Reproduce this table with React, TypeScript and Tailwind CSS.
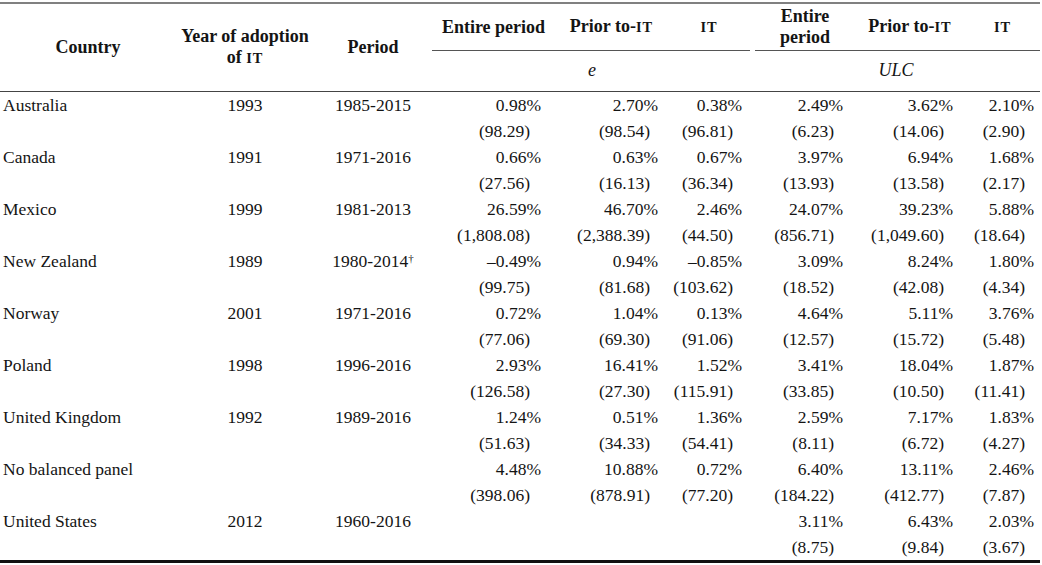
type Row = {
  country: string;
  year: string;
  period: string;
  dagger?: boolean;
  pct: string[];
  se: string[];
};

const ROWS: Row[] = [
  {
    country: "Australia",
    year: "1993",
    period: "1985-2015",
    pct: ["0.98%", "2.70%", "0.38%", "2.49%", "3.62%", "2.10%"],
    se: ["(98.29)", "(98.54)", "(96.81)", "(6.23)", "(14.06)", "(2.90)"],
  },
  {
    country: "Canada",
    year: "1991",
    period: "1971-2016",
    pct: ["0.66%", "0.63%", "0.67%", "3.97%", "6.94%", "1.68%"],
    se: ["(27.56)", "(16.13)", "(36.34)", "(13.93)", "(13.58)", "(2.17)"],
  },
  {
    country: "Mexico",
    year: "1999",
    period: "1981-2013",
    pct: ["26.59%", "46.70%", "2.46%", "24.07%", "39.23%", "5.88%"],
    se: ["(1,808.08)", "(2,388.39)", "(44.50)", "(856.71)", "(1,049.60)", "(18.64)"],
  },
  {
    country: "New Zealand",
    year: "1989",
    period: "1980-2014",
    dagger: true,
    pct: ["–0.49%", "0.94%", "–0.85%", "3.09%", "8.24%", "1.80%"],
    se: ["(99.75)", "(81.68)", "(103.62)", "(18.52)", "(42.08)", "(4.34)"],
  },
  {
    country: "Norway",
    year: "2001",
    period: "1971-2016",
    pct: ["0.72%", "1.04%", "0.13%", "4.64%", "5.11%", "3.76%"],
    se: ["(77.06)", "(69.30)", "(91.06)", "(12.57)", "(15.72)", "(5.48)"],
  },
  {
    country: "Poland",
    year: "1998",
    period: "1996-2016",
    pct: ["2.93%", "16.41%", "1.52%", "3.41%", "18.04%", "1.87%"],
    se: ["(126.58)", "(27.30)", "(115.91)", "(33.85)", "(10.50)", "(11.41)"],
  },
  {
    country: "United Kingdom",
    year: "1992",
    period: "1989-2016",
    pct: ["1.24%", "0.51%", "1.36%", "2.59%", "7.17%", "1.83%"],
    se: ["(51.63)", "(34.33)", "(54.41)", "(8.11)", "(6.72)", "(4.27)"],
  },
  {
    country: "No balanced panel",
    year: "",
    period: "",
    pct: ["4.48%", "10.88%", "0.72%", "6.40%", "13.11%", "2.46%"],
    se: ["(398.06)", "(878.91)", "(77.20)", "(184.22)", "(412.77)", "(7.87)"],
  },
  {
    country: "United States",
    year: "2012",
    period: "1960-2016",
    pct: ["", "", "", "3.11%", "6.43%", "2.03%"],
    se: ["", "", "", "(8.75)", "(9.84)", "(3.67)"],
  },
];

// right padding per value column, percent line vs. parenthesis line
const PCT_PAD = ["pr-[14px]", "pr-[10px]", "pr-[10px]", "pr-[12px]", "pr-[12px]", "pr-[6px]"];
const SE_PAD = ["pr-[25px]", "pr-[18px]", "pr-[19px]", "pr-[21px]", "pr-[21px]", "pr-[15px]"];

// small caps "IT"
const It = () => <span className="uppercase text-[0.8em] tracking-[1px]">it</span>;

const App = () => {
  return (
    <div className="w-[1042px] h-[565px] bg-white pt-[2px] font-['Liberation_Serif',serif] text-[#141414]">
      <table className="table-fixed border-collapse w-[1040px]">
        <colgroup>
          <col className="w-[176px]" />
          <col className="w-[138px]" />
          <col className="w-[118px]" />
          <col className="w-[123px]" />
          <col className="w-[113px]" />
          <col className="w-[84px]" />
          <col className="w-[103px]" />
          <col className="w-[110px]" />
          <col className="w-[75px]" />
        </colgroup>
        <thead className="text-[18px] leading-[21px]">
          <tr className="border-t-2 border-[#808080]">
            <th rowSpan={2} className="p-0 font-bold text-center align-middle">
              Country
            </th>
            <th rowSpan={2} className="p-0 font-bold text-center align-middle">
              Year of adoption
              <br />
              of <It />
            </th>
            <th rowSpan={2} className="p-0 font-bold text-center align-middle">
              Period
            </th>
            <th className="p-0 font-bold">
              <div className="h-[47px] flex items-center justify-center border-b border-[#555]">Entire period</div>
            </th>
            <th className="p-0 font-bold">
              <div className="h-[47px] flex items-center justify-center border-b border-[#555]">
                <span>
                  Prior to-<It />
                </span>
              </div>
            </th>
            <th className="p-0 font-bold">
              <div className="h-[47px] mr-[2px] flex items-center justify-center border-b border-[#555]">
                <It />
              </div>
            </th>
            <th className="p-0 font-bold">
              <div className="h-[47px] ml-[3px] flex items-center justify-center border-b border-[#555] text-center">
                Entire
                <br />
                period
              </div>
            </th>
            <th className="p-0 font-bold">
              <div className="h-[47px] flex items-center justify-center border-b border-[#555]">
                <span>
                  Prior to-<It />
                </span>
              </div>
            </th>
            <th className="p-0 font-bold">
              <div className="h-[47px] flex items-center justify-center border-b border-[#555]">
                <It />
              </div>
            </th>
          </tr>
          <tr className="border-b border-[#444]">
            <th colSpan={3} className="h-[40px] p-0 font-normal italic text-center">
              e
            </th>
            <th colSpan={3} className="h-[40px] p-0 font-normal italic text-center">
              ULC
            </th>
          </tr>
        </thead>
        <tbody className="text-[17.5px] leading-[26px]">
          {ROWS.map((r, i) => (
            <>
              <tr key={`${r.country}-a`} className="h-[26px]">
                <td className="p-0 pl-[3px] whitespace-nowrap">{r.country}</td>
                <td className="p-0 text-center">{r.year}</td>
                <td className="p-0 text-center whitespace-nowrap">
                  {r.period}
                  {r.dagger && <span className="relative -top-[5px] text-[11px] leading-none">†</span>}
                </td>
                {r.pct.map((v, j) => (
                  <td key={j} className={`p-0 text-right whitespace-nowrap ${PCT_PAD[j]}`}>
                    {v}
                  </td>
                ))}
              </tr>
              <tr
                key={`${r.country}-b`}
                className={i === ROWS.length - 1 ? "h-[26px] border-b-[3px] border-[#111]" : "h-[26px]"}
              >
                <td className="p-0" />
                <td className="p-0" />
                <td className="p-0" />
                {r.se.map((v, j) => (
                  <td key={j} className={`p-0 text-right whitespace-nowrap ${SE_PAD[j]}`}>
                    {v}
                  </td>
                ))}
              </tr>
            </>
          ))}
        </tbody>
      </table>
    </div>
  );
};

export default App;
